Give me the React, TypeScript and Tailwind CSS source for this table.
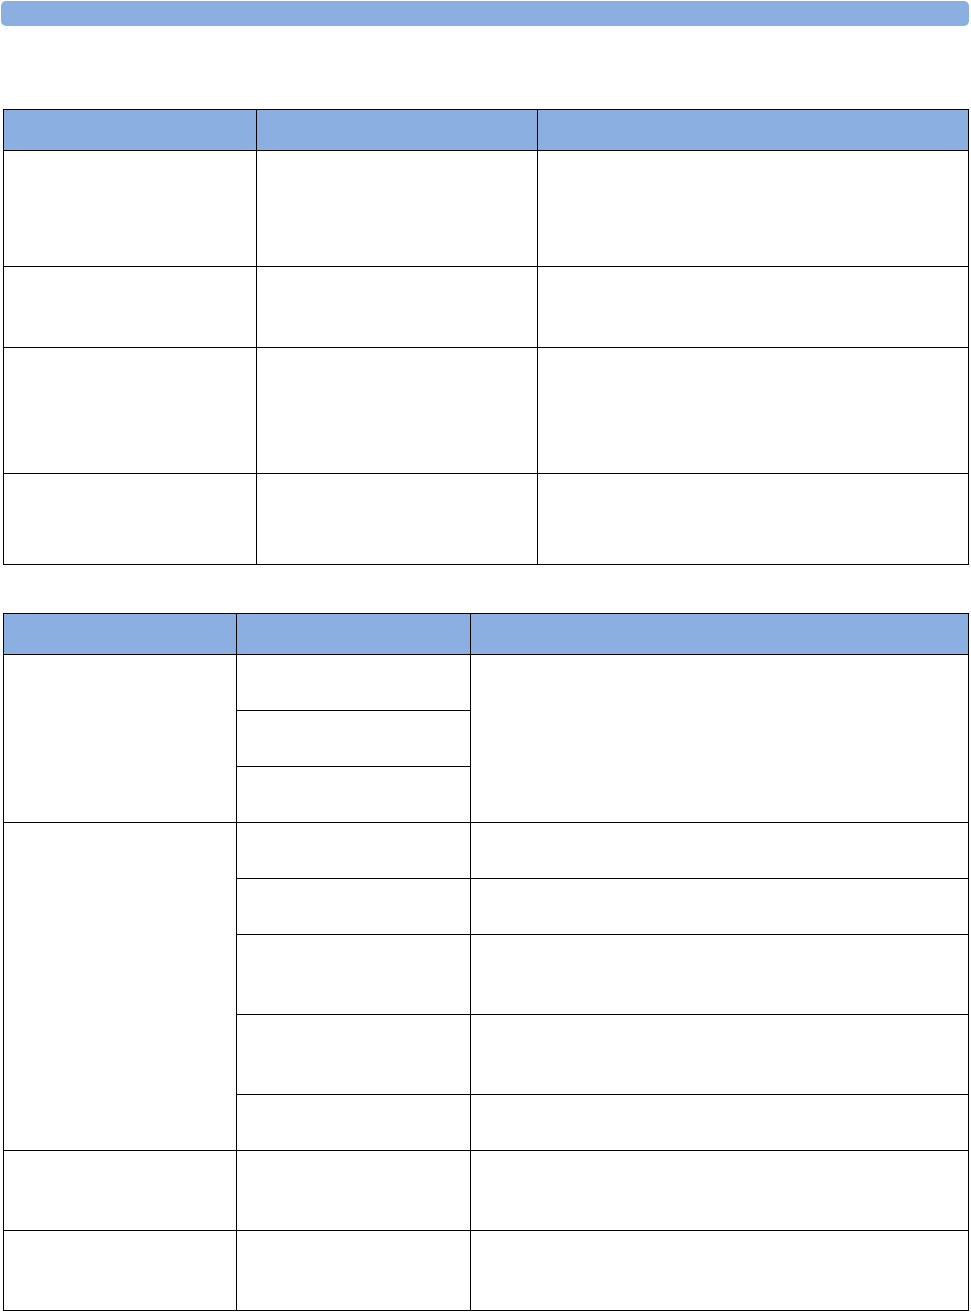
export default function App() {
  const cell = 'border border-black p-0 align-top';
  const head = 'border border-black bg-[#8cafe2] p-0';

  return (
    <div className="w-[971px] min-h-[1314px] bg-white font-['Liberation_Sans',Arial,sans-serif]">
      {/* Top band */}
      <div className="mx-[1px] pt-[1px]">
        <div className="h-[25px] w-[968px] rounded-[5px] bg-[#8cafe2]" />
      </div>

      {/* First table */}
      <div className="pl-[3px] pt-[83px]">
        <table className="table-fixed border-collapse w-[966px]">
          <colgroup>
            <col className="w-[253px]" />
            <col className="w-[281px]" />
            <col className="w-[431px]" />
          </colgroup>
          <thead>
            <tr className="h-[41px]">
              <th className={head}></th>
              <th className={head}></th>
              <th className={head}></th>
            </tr>
          </thead>
          <tbody>
            {[116, 81, 126, 91].map((h, i) => (
              <tr key={i} style={{ height: h }}>
                <td className={cell}></td>
                <td className={cell}></td>
                <td className={cell}></td>
              </tr>
            ))}
          </tbody>
        </table>
      </div>

      {/* Second table */}
      <div className="pl-[3px] pt-[48px]">
        <table className="table-fixed border-collapse w-[966px]">
          <colgroup>
            <col className="w-[233px]" />
            <col className="w-[234px]" />
            <col className="w-[498px]" />
          </colgroup>
          <thead>
            <tr className="h-[41px]">
              <th className={head}></th>
              <th className={head}></th>
              <th className={head}></th>
            </tr>
          </thead>
          <tbody>
            <tr className="h-[56px]">
              <td rowSpan={3} className={cell}></td>
              <td className={cell}></td>
              <td rowSpan={3} className={cell}></td>
            </tr>
            <tr className="h-[56px]">
              <td className={cell}></td>
            </tr>
            <tr className="h-[56px]">
              <td className={cell}></td>
            </tr>
            <tr className="h-[56px]">
              <td rowSpan={5} className={cell}></td>
              <td className={cell}></td>
              <td className={cell}></td>
            </tr>
            <tr className="h-[56px]">
              <td className={cell}></td>
              <td className={cell}></td>
            </tr>
            <tr className="h-[80px]">
              <td className={cell}></td>
              <td className={cell}></td>
            </tr>
            <tr className="h-[80px]">
              <td className={cell}></td>
              <td className={cell}></td>
            </tr>
            <tr className="h-[56px]">
              <td className={cell}></td>
              <td className={cell}></td>
            </tr>
            <tr className="h-[80px]">
              <td className={cell}></td>
              <td className={cell}></td>
              <td className={cell}></td>
            </tr>
            <tr className="h-[80px]">
              <td className={cell}></td>
              <td className={cell}></td>
              <td className={cell}></td>
            </tr>
          </tbody>
        </table>
      </div>
    </div>
  );
}
